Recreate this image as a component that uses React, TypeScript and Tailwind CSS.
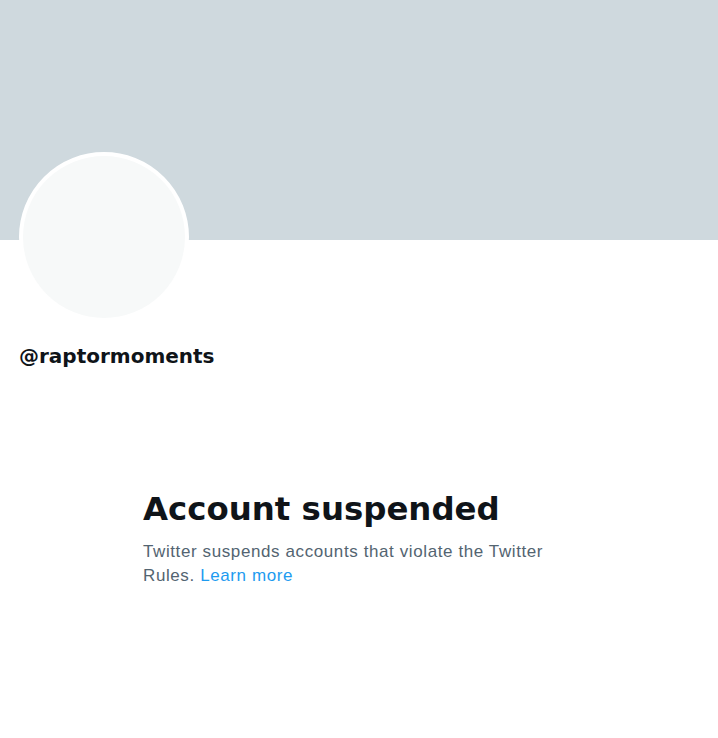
export default function App() {
  return (
    <div className="min-h-[738px] w-[718px] bg-white font-['Liberation_Sans',Arial,sans-serif]">
      {/* Banner */}
      <div className="h-[240px] bg-[#cfd9de]" />

      {/* Avatar */}
      <div className="-mt-[88px] ml-[19px] h-[170px] w-[170px] rounded-full border-[4px] border-white bg-[#f7f9f9]" />

      {/* Handle */}
      <div className="mt-[22px] px-[19px] font-['DejaVu_Sans',sans-serif] text-[20px] font-bold leading-[24px] text-[#0f1419]">
        @raptormoments
      </div>

      {/* Empty state */}
      <div className="mx-auto mt-[121px] w-[432px]">
        <h1 className="font-['DejaVu_Sans',sans-serif] text-[32.4px] font-bold leading-[40px] text-[#0f1419]">
          Account suspended
        </h1>
        <p className="mt-[11px] text-[17px] leading-[24px] tracking-[0.6px] text-[#536471]">
          Twitter suspends accounts that violate the Twitter
          <br />
          Rules.{" "}
          <a href="#" className="text-[#1d9bf0]">
            Learn more
          </a>
        </p>
      </div>
    </div>
  );
}
